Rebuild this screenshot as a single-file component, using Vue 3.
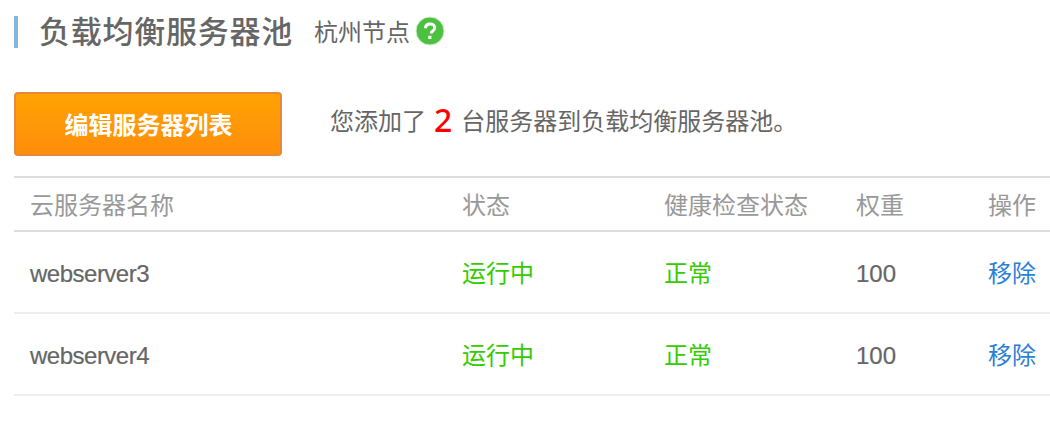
<script setup>
const columns = ['云服务器名称', '状态', '健康检查状态', '权重', '操作']
const servers = [
  { name: 'webserver3', status: '运行中', health: '正常', weight: 100 },
  { name: 'webserver4', status: '运行中', health: '正常', weight: 100 },
]
</script>

<template>
  <div class="page">
    <div class="title-row">
      <h1 class="title">负载均衡服务器池</h1>
      <span class="node">杭州节点</span>
      <svg class="help" viewBox="0 0 30 30" width="30" height="30" aria-hidden="true">
        <circle cx="15" cy="15" r="14" fill="#4cc13f" stroke="#d5ecd0" stroke-width="1" />
        <path d="M10.500 12.200c0-2.700 2-4.200 4.600-4.200 2.700 0 4.600 1.500 4.600 3.800 0 1.800-1 2.700-2.200 3.500-1 .7-1.300 1.100-1.300 2.200" fill="none" stroke="#fff" stroke-width="3" />
        <rect x="13.200" y="19.800" width="3.200" height="3.200" fill="#fff" />
      </svg>
    </div>

    <div class="action-row">
      <button class="edit-btn" type="button"><span class="btn-label">编辑服务器列表</span></button>
      <p class="summary">您添加了<b class="count">2</b>台服务器到负载均衡服务器池。</p>
    </div>

    <div class="table">
      <div class="row head">
        <div v-for="c in columns" :key="c" class="cell">{{ c }}</div>
      </div>
      <div v-for="s in servers" :key="s.name" class="row body">
        <div class="cell latin name">{{ s.name }}</div>
        <div class="cell cjk ok">{{ s.status }}</div>
        <div class="cell cjk ok">{{ s.health }}</div>
        <div class="cell latin strong">{{ s.weight }}</div>
        <div class="cell cjk"><a class="link">移除</a></div>
      </div>
    </div>
  </div>
</template>

<style>
html, body { margin: 0; background: #fff; }
</style>

<style scoped>
.page {
  width: 1050px;
  height: 434px;
  overflow: hidden;
  box-sizing: border-box;
  padding: 16px 0 0 14px;
  font-family: "Liberation Sans", "Noto Sans CJK SC", sans-serif;
  font-size: 24px;
  color: #666;
  background: #fff;
}
.title-row {
  display: flex;
  align-items: center;
  height: 32px;
  border-left: 4px solid #83b7e0;
  padding-left: 21px;
}
.title {
  margin: 0;
  padding-top: 2px;
  font-size: 31px;
  line-height: 32px;
  font-weight: 500;
  letter-spacing: 0.75px;
  color: #666;
}
.node {
  margin-left: 21px;
  padding-top: 2px;
  line-height: 32px;
}
.help {
  margin-left: 5px;
  margin-top: -2px;
}
.action-row {
  display: flex;
  align-items: center;
  margin-top: 44px;
}
.edit-btn {
  width: 268px;
  height: 64px;
  padding: 0 0 0 1px;
  box-sizing: border-box;
  border: 2px solid #e48a3c;
  border-radius: 4px;
  background: linear-gradient(#ffa204, #ff8e0b);
  color: #fff;
  font: 700 24px "Liberation Sans", "Noto Sans CJK SC", sans-serif;
}
.btn-label { display: block; padding-bottom: 2px; }
.summary {
  margin: 0 0 4px 48px;
  display: flex;
  align-items: center;
  line-height: 56px;
}
.count {
  margin: -6px 9px 0 8px;
  font: 500 32px "Noto Sans", sans-serif;
  color: #f00;
}
.table {
  margin-top: 20px;
  width: 1036px;
  border-top: 2px solid #ddd;
}
.row {
  display: grid;
  grid-template-columns: 432px 202px 192px 132px 1fr;
  padding-left: 16px;
  align-items: center;
}
.head {
  height: 52px;
  border-bottom: 2px solid #ddd;
  color: #999;
}
.head .cell { padding-bottom: 2px; }
.body {
  height: 80px;
  border-bottom: 2px solid #eee;
}
.latin { padding-top: 4px; }
.cjk { padding-bottom: 2px; }
.name { letter-spacing: -0.5px; -webkit-text-stroke: 0.2px #666; }
.strong { -webkit-text-stroke: 0.2px #666; }
.ok { color: #33cc00; }
.link { color: #2a7fd8; }
</style>
